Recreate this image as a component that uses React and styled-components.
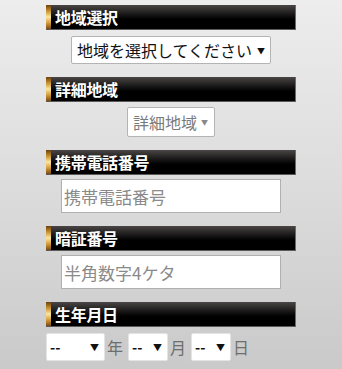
import styled, { createGlobalStyle } from 'styled-components';

const GlobalStyle = createGlobalStyle`
	html, body {
		margin: 0;
		padding: 0;
	}
	body {
		min-height: 100vh;
		background: linear-gradient(180deg, #ededed 0%, #dcdcdc 50%, #c9c9c9 100%);
		font-family: "Noto Sans CJK JP", "Noto Sans", sans-serif;
	}
`;

const Form = styled.form`
	width: 250px;
	margin: 0 auto;
	padding-top: 5px;
`;

const Section = styled.section`
	margin-bottom: 13px;
	display: flex;
	flex-direction: column;
	align-items: ${p => (p.$left ? 'flex-start' : 'center')};
`;

const Heading = styled.h2`
	box-sizing: border-box;
	align-self: stretch;
	height: 25px;
	margin: 0 0 ${p => p.$gap || 5}px;
	padding-left: 9px;
	position: relative;
	display: flex;
	align-items: center;
	font-size: 16px;
	font-weight: 700;
	color: #fff;
	letter-spacing: -0.3px;
	background: linear-gradient(180deg, #4b4646 0%, #1d1b1b 35%, #000 60%, #000 100%);
	border-right: 1px solid #6a6a6a;
	border-bottom: 1px solid #5a5a5a;
	text-shadow: 0 1px 1px rgba(0, 0, 0, 0.6);

	&::before {
		content: '';
		position: absolute;
		left: 0;
		top: 0;
		bottom: 0;
		width: 5px;
		background: linear-gradient(180deg, #6b3f10 0%, #c8902e 25%, #fbe6a0 50%, #d49a3a 75%, #7a4a14 100%);
	}
`;

const SelectWrap = styled.span`
	position: relative;
	display: inline-block;

	&::after {
		content: '▼';
		position: absolute;
		right: ${p => p.$arrowRight || 10}px;
		top: 50%;
		transform: translateY(-50%);
		font-size: ${p => p.$arrowSize || 9}px;
		color: ${p => (p.$disabled ? '#888' : '#111')};
		pointer-events: none;
	}
`;

const Select = styled.select`
	appearance: none;
	-webkit-appearance: none;
	box-sizing: border-box;
	width: ${p => p.$w}px;
	height: ${p => p.$h || 28}px;
	padding: 0 0 0 ${p => p.$pad || 5}px;
	margin: 0;
	border: 1px solid ${p => (p.$borderless ? '#e4e4e4' : '#b4b4b4')};
	border-radius: 2px;
	background: #fff;
	font-family: "Noto Sans CJK JP", "Noto Sans", sans-serif;
	font-size: ${p => p.$fs || 16}px;
	color: ${p => (p.disabled ? '#7a7a7a' : '#111')};
	font-weight: ${p => p.$bold ? 700 : 400};
	opacity: 1;
`;

const Input = styled.input`
	box-sizing: border-box;
	width: 220px;
	height: 34px;
	margin: 0;
	padding: 0 2px;
	border: 1px solid #b0b0b0;
	background: #fff;
	font-family: "Noto Sans CJK JP", "Noto Sans", sans-serif;
	font-size: 17px;
	color: #222;

	&::placeholder {
		color: #8a8a8a;
	}
`;

const DateRow = styled.div`
	display: flex;
	align-items: center;
`;

const Unit = styled.span`
	font-family: "Liberation Serif", "Noto Sans CJK JP", serif;
	font-size: 16px;
	color: #6e6e6e;
	margin: 0 5px 0 2px;
`;

export default function App() {
	return (
		<>
			<GlobalStyle />
			<Form>
				<Section>
					<Heading $gap={6}>地域選択</Heading>
					<SelectWrap $arrowRight={6} $arrowSize={8}>
						<Select $w={200} $h={28} defaultValue="">
							<option value="">地域を選択してください</option>
						</Select>
					</SelectWrap>
				</Section>

				<Section>
					<Heading>詳細地域</Heading>
					<SelectWrap $disabled $arrowRight={7} $arrowSize={7}>
						<Select $w={88} $h={30} disabled defaultValue="">
							<option value="">詳細地域</option>
						</Select>
					</SelectWrap>
				</Section>

				<Section>
					<Heading $gap={4}>携帯電話番号</Heading>
					<Input type="tel" placeholder="携帯電話番号" />
				</Section>

				<Section>
					<Heading $gap={4}>暗証番号</Heading>
					<Input type="password" placeholder="半角数字4ケタ" />
				</Section>

				<Section $left>
					<Heading $gap={6}>生年月日</Heading>
					<DateRow>
						<SelectWrap $arrowRight={6}>
							<Select $w={59} $h={28} $pad={3} $fs={14} $bold $borderless defaultValue="">
								<option value="">--</option>
							</Select>
						</SelectWrap>
						<Unit>年</Unit>
						<SelectWrap $arrowRight={6}>
							<Select $w={40} $h={28} $pad={3} $fs={14} $bold $borderless defaultValue="">
								<option value="">--</option>
							</Select>
						</SelectWrap>
						<Unit>月</Unit>
						<SelectWrap $arrowRight={6}>
							<Select $w={40} $h={28} $pad={3} $fs={14} $bold $borderless defaultValue="">
								<option value="">--</option>
							</Select>
						</SelectWrap>
						<Unit>日</Unit>
					</DateRow>
				</Section>
			</Form>
		</>
	);
}
